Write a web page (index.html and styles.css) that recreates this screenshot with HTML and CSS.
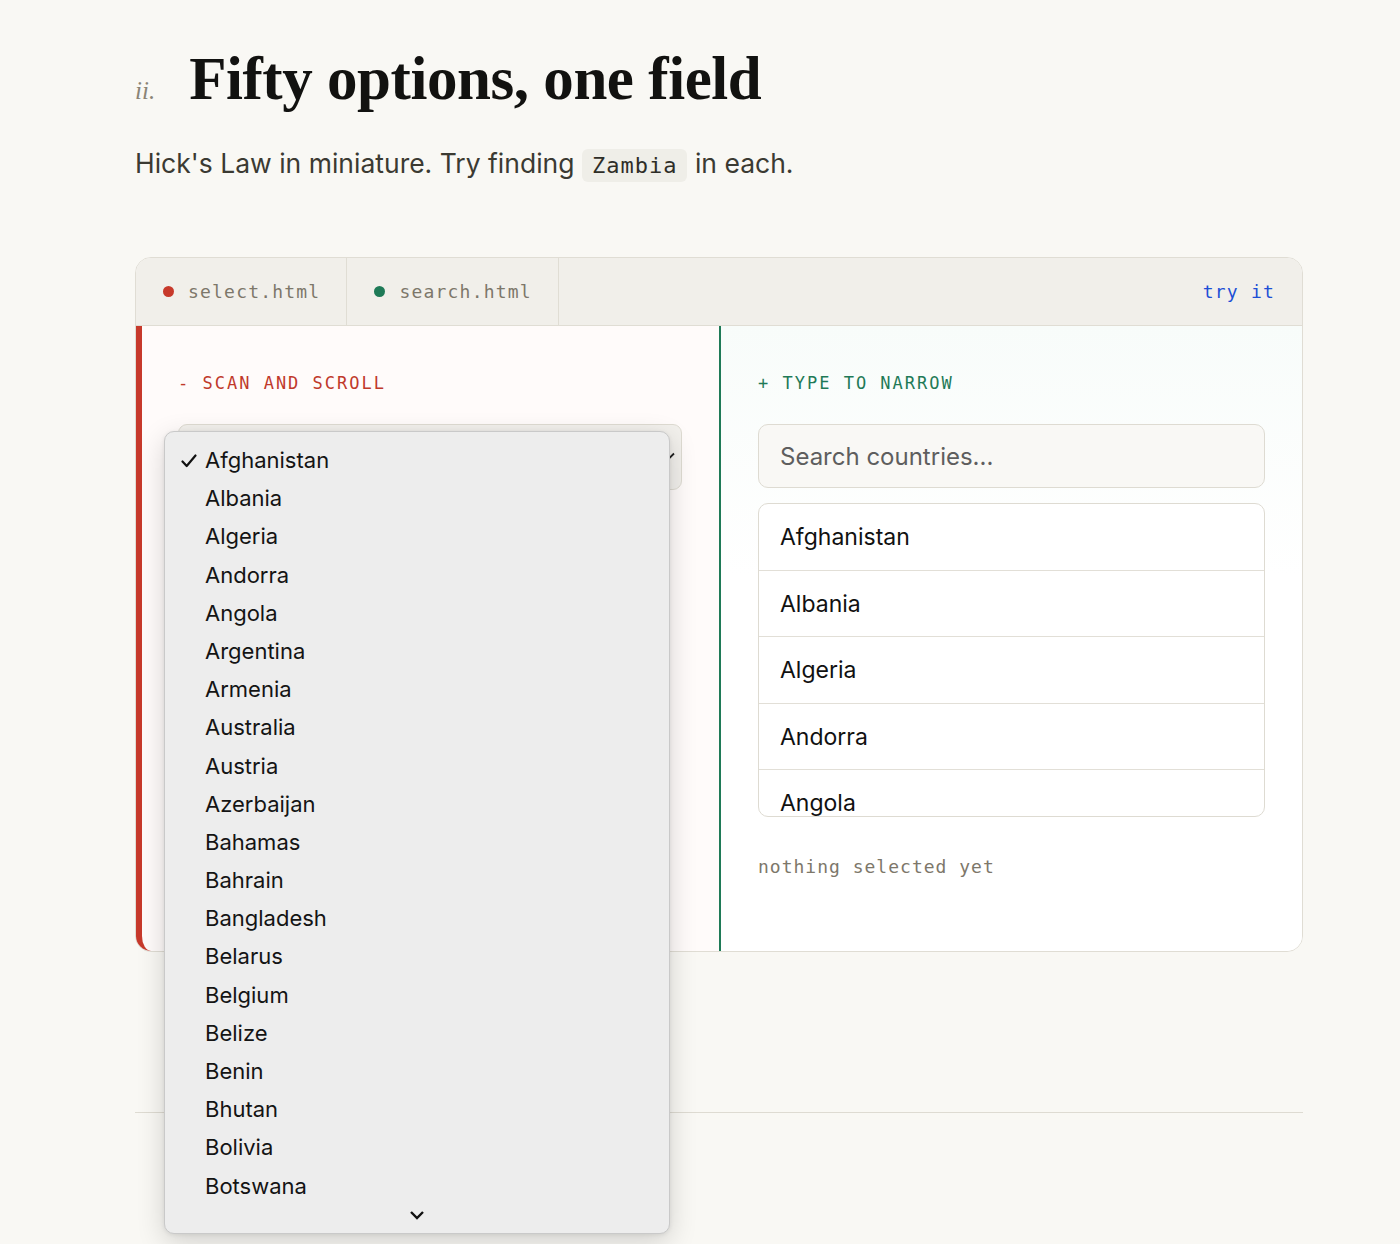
FILE: index.html
```html
<!DOCTYPE html>
<html lang="en">
<head>
<meta charset="utf-8">
<title>Fifty options, one field</title>
<link rel="stylesheet" href="styles.css">
</head>
<body>
<main class="page">
  <header class="section-head">
    <span class="section-num">ii.</span>
    <h1 class="section-title">Fifty options, one field</h1>
  </header>
  <p class="lede">Hick's Law in miniature. Try finding <code class="pill">Zambia</code> in each.</p>

  <section class="demo">
    <div class="tabs">
      <div class="tab"><span class="dot dot-red"></span>select.html</div>
      <div class="tab"><span class="dot dot-green"></span>search.html</div>
      <div class="tabs-fill"></div>
      <div class="try">try it</div>
    </div>
    <div class="demo-body">
      <div class="pane pane-bad">
        <div class="pane-label label-bad">- SCAN AND SCROLL</div>
        <div class="select-box">
          <svg class="select-chev" width="12" height="8" viewBox="0 0 12 8"><path d="M1 1.5l5 5 5-5" fill="none" stroke="#222" stroke-width="1.8"/></svg>
        </div>
        <div class="popup">
          <ul class="popup-list">
            <li class="popup-item checked"><svg class="check" width="16" height="14" viewBox="0 0 16 14"><path d="M1.5 7.5l4.2 4.5L14.5 1.5" fill="none" stroke="#111" stroke-width="2.2" stroke-linecap="round" stroke-linejoin="round"/></svg>Afghanistan</li>
            <li class="popup-item">Albania</li>
            <li class="popup-item">Algeria</li>
            <li class="popup-item">Andorra</li>
            <li class="popup-item">Angola</li>
            <li class="popup-item">Argentina</li>
            <li class="popup-item">Armenia</li>
            <li class="popup-item">Australia</li>
            <li class="popup-item">Austria</li>
            <li class="popup-item">Azerbaijan</li>
            <li class="popup-item">Bahamas</li>
            <li class="popup-item">Bahrain</li>
            <li class="popup-item">Bangladesh</li>
            <li class="popup-item">Belarus</li>
            <li class="popup-item">Belgium</li>
            <li class="popup-item">Belize</li>
            <li class="popup-item">Benin</li>
            <li class="popup-item">Bhutan</li>
            <li class="popup-item">Bolivia</li>
            <li class="popup-item">Botswana</li>
          </ul>
          <div class="popup-more">
            <svg width="16" height="10" viewBox="0 0 16 10"><path d="M2 2l6 6 6-6" fill="none" stroke="#111" stroke-width="2.4"/></svg>
          </div>
        </div>
      </div>
      <div class="pane pane-good">
        <div class="pane-label label-good">+ TYPE TO NARROW</div>
        <input class="search" type="text" placeholder="Search countries...">
        <ul class="results">
          <li class="result">Afghanistan</li>
          <li class="result">Albania</li>
          <li class="result">Algeria</li>
          <li class="result">Andorra</li>
          <li class="result">Angola</li>
        </ul>
        <div class="status">nothing selected yet</div>
      </div>
    </div>
  </section>

  <hr class="rule">
</main>
</body>
</html>
```

FILE: styles.css
```css
* { box-sizing: border-box; }

body {
  margin: 0;
  background: #f9f8f4;
  color: #1a1a16;
  font-family: Inter, "Noto Sans", sans-serif;
}

.page {
  width: 1168px;
  margin-left: 135px;
  padding: 40px 0 160px;
}

.section-head {
  display: flex;
  align-items: baseline;
  gap: 34px;
  height: 78px;
}

.section-num {
  font-family: "Liberation Serif", serif;
  font-style: italic;
  font-size: 25px;
  color: #8a8476;
}

.section-title {
  margin: 0;
  font-family: "Liberation Serif", serif;
  font-weight: 700;
  font-size: 61px;
  line-height: 78px;
  letter-spacing: -0.45px;
  color: #121210;
}

.lede {
  margin: 26px 0 0;
  font-size: 26.5px;
  line-height: 38px;
  color: #3b3a32;
}

.pill {
  font-family: "DejaVu Sans Mono", monospace;
  font-size: 22px;
  letter-spacing: 1px;
  background: #efeee8;
  border-radius: 6px;
  padding: 4px 10px;
  color: #2e2d27;
}

.demo {
  margin-top: 72px;
  border: 1px solid #e0ddd4;
  border-radius: 16px;
  background: #fff;
}

.tabs {
  display: flex;
  align-items: stretch;
  height: 68px;
  background: #f1efea;
  border-bottom: 1px solid #e0ddd4;
  border-radius: 15px 15px 0 0;
  font-family: "DejaVu Sans Mono", monospace;
  font-size: 18px;
  letter-spacing: 1.2px;
  color: #7d776a;
}

.tab {
  display: flex;
  align-items: center;
  gap: 14px;
  padding: 0 26px 0 27px;
  border-right: 1px solid #e0ddd4;
}

.dot {
  width: 11px;
  height: 11px;
  border-radius: 50%;
}
.dot-red { background: #c7392b; }
.dot-green { background: #1f7a57; }

.tabs-fill { flex: 1; }

.try {
  display: flex;
  align-items: center;
  padding-right: 27px;
  color: #1d4fd6;
}

.demo-body {
  display: grid;
  grid-template-columns: 583px 1fr;
}

.pane {
  position: relative;
  padding: 48px 37px 72px 37px;
}

.pane-bad {
  background: #fffbfa;
  border-left: 6px solid #c7392b;
  border-bottom-left-radius: 15px;
  padding-left: 36px;
}

.pane-good {
  background: linear-gradient(#f8fcfa, #ffffff 40%);
  border-left: 2px solid #1f7a57;
  border-bottom-right-radius: 15px;
}

.pane-label {
  font-family: "DejaVu Sans Mono", monospace;
  font-size: 17px;
  line-height: 18px;
  letter-spacing: 2px;
  margin-bottom: 32px;
}
.label-bad { color: #c0392b; }
.label-good { color: #1f7a57; }

.select-box {
  position: relative;
  height: 66px;
  background: #f2f0ec;
  border: 1px solid #dedbd2;
  border-radius: 9px;
}

.select-chev {
  position: absolute;
  right: 6px;
  top: 27px;
}

/* open dropdown popup drawn over the pane */
.popup {
  position: absolute;
  left: 22px;
  top: 105px;
  width: 506px;
  height: 803px;
  background: #ededed;
  border: 1px solid #c9c9c9;
  border-radius: 10px;
  box-shadow: 0 8px 28px rgba(0, 0, 0, 0.16), 0 1px 4px rgba(0, 0, 0, 0.08);
  z-index: 5;
  padding-top: 9px;
}

.popup-list {
  list-style: none;
  margin: 0;
  padding: 0;
}

.popup-item {
  position: relative;
  height: 38.2px;
  line-height: 38.2px;
  padding-left: 40px;
  font-size: 22px;
  color: #141414;
}

.check {
  position: absolute;
  left: 16px;
  top: 13px;
}

.popup-more {
  display: flex;
  justify-content: center;
  padding-top: 5px;
}

.search {
  display: block;
  width: 100%;
  height: 64px;
  padding: 0 21px;
  background: #f9f8f5;
  border: 1px solid #dedbd2;
  border-radius: 10px;
  font-family: Inter, "Noto Sans", sans-serif;
  font-size: 24px;
  color: #222;
  outline: none;
}
.search::placeholder { color: #5e5e5e; }

.results {
  list-style: none;
  margin: 15px 0 0;
  padding: 0;
  height: 314px;
  overflow: hidden;
  background: #fff;
  border: 1px solid #dedbd2;
  border-radius: 10px;
}

.result {
  height: 66.5px;
  line-height: 66px;
  padding: 0 21px;
  font-size: 23px;
  color: #111;
  border-bottom: 1px solid #e2dfd7;
}

.status {
  margin-top: 38px;
  font-family: "DejaVu Sans Mono", monospace;
  font-size: 18px;
  letter-spacing: 1px;
  line-height: 24px;
  color: #7d776a;
}

.rule {
  margin: 160px 0 0;
  border: 0;
  border-top: 1px solid #dedbd2;
}
```
